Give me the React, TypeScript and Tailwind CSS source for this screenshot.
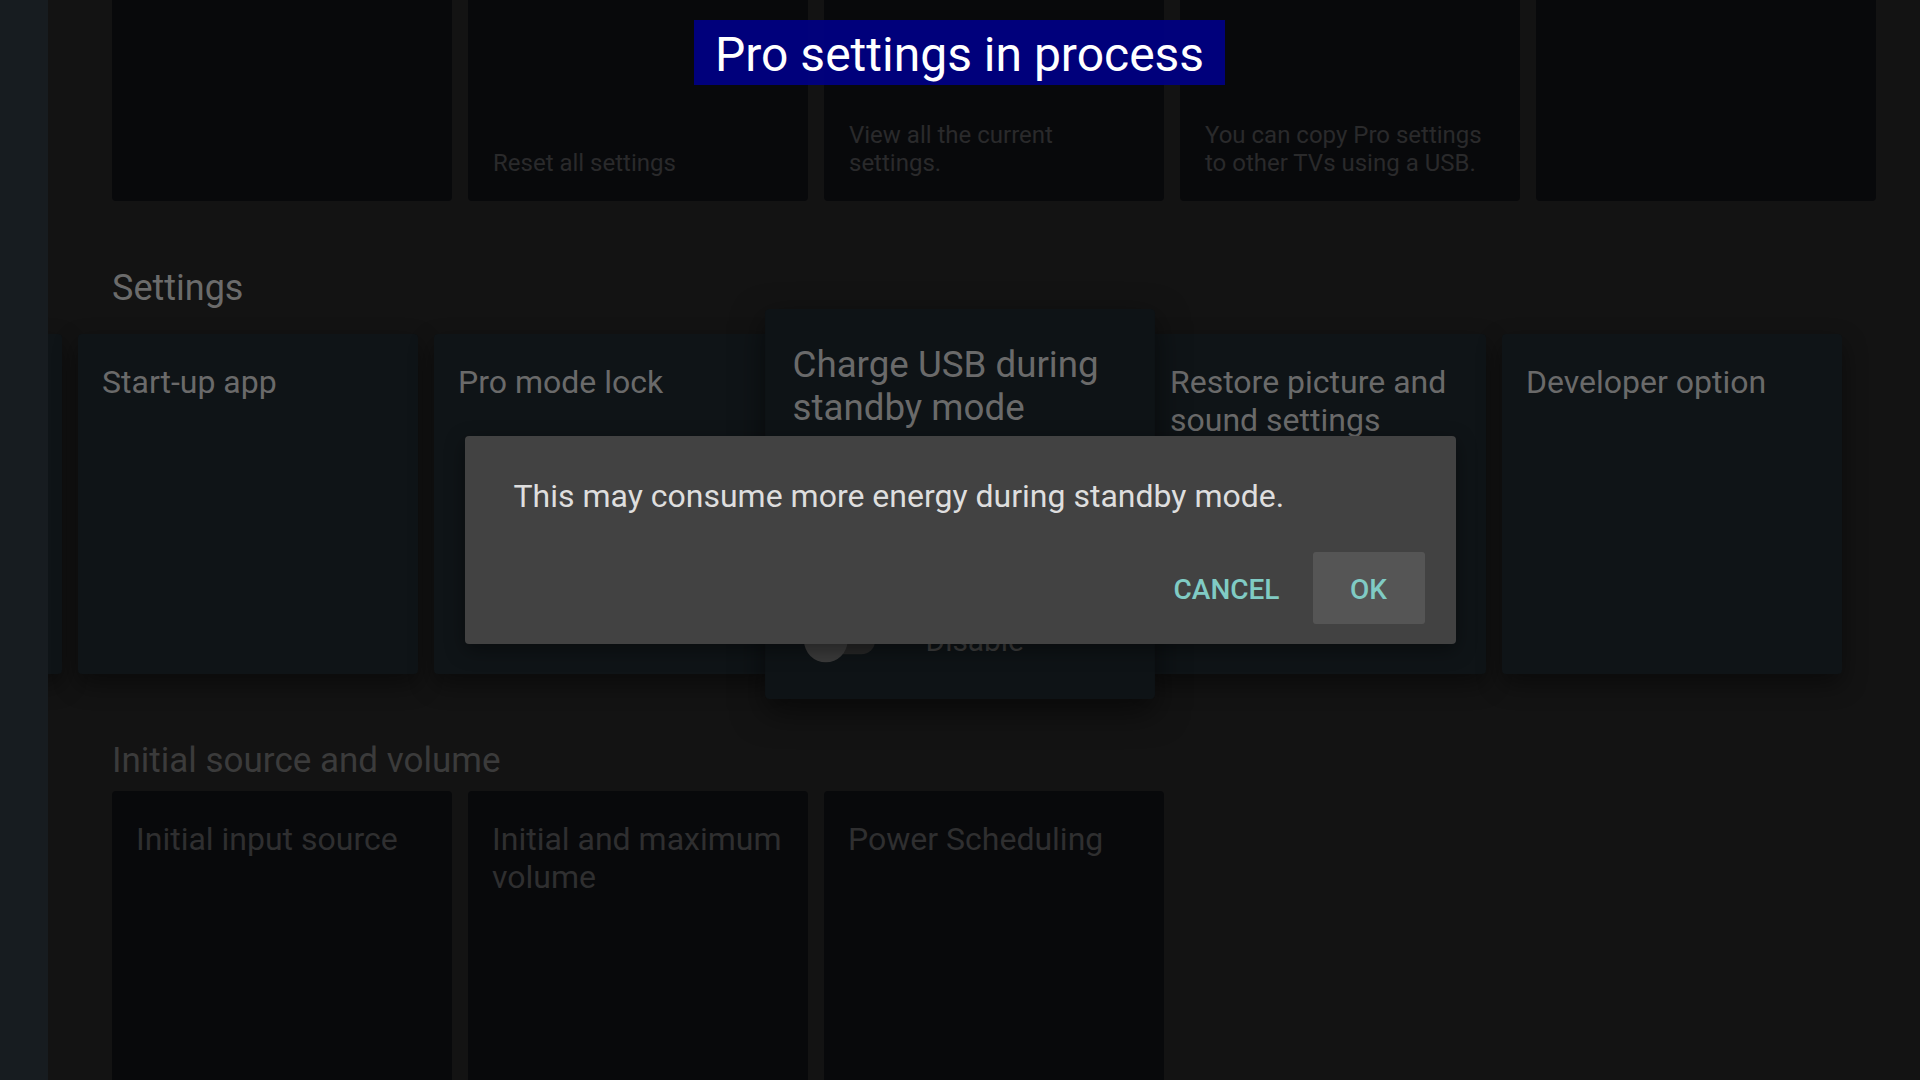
import React from "react";

function TopCard({ text }: { text?: string }) {
  return (
    <div className="w-[340px] h-[340px] shrink-0 rounded-[4px] bg-[#08090b] flex flex-col justify-end px-[25px] pb-[24px]">
      {text ? (
        <div className="text-[24px] leading-[28px] text-[#2a2a2b] whitespace-pre-line">{text}</div>
      ) : null}
    </div>
  );
}

function SettingCard({ title }: { title?: string }) {
  return (
    <div className="w-[340px] h-[340px] shrink-0 rounded-[4px] bg-[#0f1417] shadow-[0_10px_24px_rgba(0,0,0,0.45)] px-[24px] pt-[29px]">
      {title ? (
        <div className="text-[32px] leading-[38px] text-[#6a6a6a] whitespace-pre-line">{title}</div>
      ) : null}
    </div>
  );
}

function BottomCard({ title }: { title: string }) {
  return (
    <div className="w-[340px] h-[340px] shrink-0 rounded-[4px] bg-[#08090b] px-[24px] pt-[29px]">
      <div className="text-[32px] leading-[38px] text-[#2f2f30] whitespace-pre-line">{title}</div>
    </div>
  );
}

export default function App() {
  return (
    <div className="relative w-[1920px] h-[1080px] overflow-hidden flex bg-[#131313] [font-family:Roboto,'Noto_Sans',sans-serif]">
      <div className="w-[48px] shrink-0 bg-[#171c20]" />
      <div className="flex-1 flex flex-col overflow-hidden">
        {/* top row (scrolled) */}
        <div className="flex gap-[16px] pl-[64px] mt-[-139px]">
          <TopCard />
          <TopCard text="Reset all settings" />
          <TopCard text={"View all the current\nsettings."} />
          <TopCard text={"You can copy Pro settings\nto other TVs using a USB."} />
          <TopCard />
        </div>

        <div className="pl-[64px] mt-[66px] text-[36px] leading-[42px] text-[#6b6b6b]">Settings</div>

        <div className="flex gap-[16px] ml-[-326px] mt-[25px]">
          <SettingCard />
          <SettingCard title="Start-up app" />
          <SettingCard title="Pro mode lock" />
          <div className="relative z-10 w-[340px] h-[340px] shrink-0 scale-[1.147] rounded-[4px] bg-[#0e1316] shadow-[0_10px_28px_rgba(0,0,0,0.55)] px-[24px] pt-[29px] flex flex-col">
            <div className="text-[32px] leading-[38px] text-[#6a6a6a]">
              Charge USB during
              <br />
              standby mode
            </div>
            <div className="mt-auto mb-[32px] flex items-center">
              <div className="relative w-[62px] h-[38px] ml-[10px]">
                <div className="absolute left-[6px] top-[7px] w-[56px] h-[24px] rounded-full bg-[#262626]" />
                <div className="absolute left-0 top-0 w-[38px] h-[38px] rounded-full bg-[#3a3a3a]" />
              </div>
              <div className="ml-[44px] text-[26px] leading-[30px] text-[#3d3d3d]">Disable</div>
            </div>
          </div>
          <SettingCard title={"Restore picture and\nsound settings"} />
          <SettingCard title="Developer option" />
        </div>

        <div className="pl-[64px] mt-[66px] text-[35px] leading-[42px] text-[#3b3b3b]">Initial source and volume</div>

        <div className="flex gap-[16px] pl-[64px] mt-[9px]">
          <BottomCard title="Initial input source" />
          <BottomCard title={"Initial and maximum\nvolume"} />
          <BottomCard title="Power Scheduling" />
        </div>
      </div>

      {/* status banner */}
      <div className="absolute z-30 top-[20px] left-[694px] h-[65px] px-[21px] pt-[7px] bg-[#000080]/95 text-white text-[48px] leading-[56px] whitespace-nowrap">
        Pro settings in process
      </div>

      {/* dialog */}
      <div className="absolute z-20 inset-0 flex items-center justify-center">
        <div className="w-[991px] h-[208px] rounded-[4px] bg-[#424242] flex flex-col pl-[49px] pr-[31px] pt-[40px] pb-[20px] shadow-[0_6px_20px_rgba(0,0,0,0.4)]">
          <div className="text-[32px] leading-[40px] text-[#dedede]">
            This may consume more energy during standby mode.
          </div>
          <div className="mt-auto flex justify-end items-center gap-[17px]">
            <button className="h-[72px] px-[16px] pt-[3px] rounded-[3px] text-[28px] font-medium text-[#80cbc4]">CANCEL</button>
            <button className="h-[72px] w-[112px] pt-[3px] rounded-[3px] bg-[#555555] text-[28px] font-medium text-[#80cbc4]">OK</button>
          </div>
        </div>
      </div>
    </div>
  );
}
